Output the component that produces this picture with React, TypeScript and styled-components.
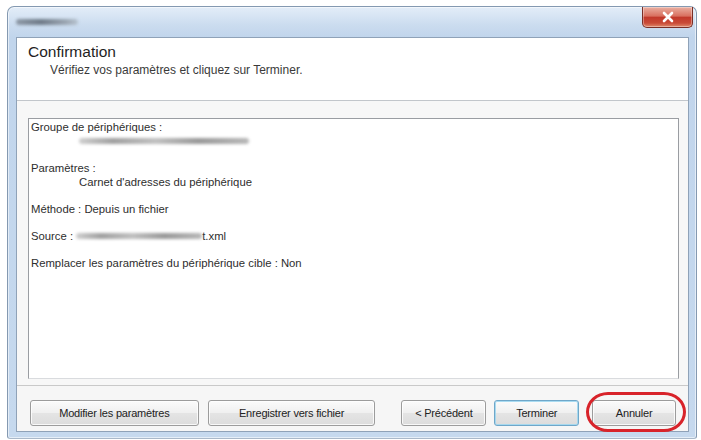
import React from "react";
import styled, { createGlobalStyle } from "styled-components";

const GlobalStyle = createGlobalStyle`
  html, body {
    margin: 0;
    padding: 0;
    background: #ffffff;
  }
  body {
    font-family: "Liberation Sans", Arial, sans-serif;
    color: #2b2b2b;
  }
`;

const Page = styled.div`
  padding: 6px 4px 0 7px;
`;

const Window = styled.div`
  width: 690px;
  height: 433px;
  box-sizing: border-box;
  border: 1px solid #8499b1;
  border-bottom-color: #a9b8c9;
  border-radius: 7px 7px 3px 3px;
  background: linear-gradient(
    to bottom,
    #e3edf8 0px,
    #cbdcef 18px,
    #c1d5ec 30px,
    #c6d9ee 100%
  );
  padding: 0 7px 6px 8px;
  display: flex;
  flex-direction: column;
  box-shadow: inset 0 0 0 1px rgba(255, 255, 255, 0.55);
`;

const TitleBar = styled.div`
  height: 30px;
  display: flex;
  align-items: flex-start;
  justify-content: space-between;
  margin-right: -4px;
`;

const TitleText = styled.div`
  margin-top: 12px;
  width: 62px;
  height: 6px;
  border-radius: 3px;
  background: linear-gradient(90deg, #8e99a6, #6f7b88 40%, #9aa5b1 80%, #b7c3cf);
  filter: blur(1.4px);
`;

const CloseButton = styled.div`
  width: 51px;
  height: 21px;
  box-sizing: border-box;
  border: 1px solid #7a2f26;
  border-top: none;
  border-radius: 0 0 5px 5px;
  background: linear-gradient(
    to bottom,
    #eab0a2 0%,
    #d9705f 45%,
    #c2392b 52%,
    #c94a36 80%,
    #e08a6c 100%
  );
  display: flex;
  align-items: center;
  justify-content: center;
  box-shadow: inset 0 0 0 1px rgba(255, 255, 255, 0.35);
`;

const Client = styled.div`
  flex: 1;
  display: flex;
  flex-direction: column;
  border: 1px solid #8fa2b8;
  background: #f3f3f3;
`;

const Header = styled.div`
  height: 63px;
  box-sizing: border-box;
  background: #ffffff;
  border-bottom: 1px solid #c2c6cb;
  padding: 5px 0 0 11px;
`;

const Heading = styled.div`
  font-size: 15.5px;
  line-height: 18px;
  color: #1f1f1f;
`;

const SubHeading = styled.div`
  margin: 2px 0 0 22px;
  font-size: 12px;
  line-height: 14px;
  color: #3a3a3a;
`;

const Body = styled.div`
  flex: 1;
  display: flex;
  flex-direction: column;
  padding: 17px 9px 6px 11px;
  background: #f7f7f7;
`;

const ListBox = styled.div`
  flex: 1;
  background: #ffffff;
  border: 1px solid #9a9da2;
  border-bottom-color: #d9dbde;
  padding: 1px 0 0 2px;
  display: flex;
  flex-direction: column;
  gap: 13px;
`;

const Item = styled.div`
  display: flex;
  flex-direction: column;
`;

const Line = styled.div<{ $indent?: number }>`
  font-size: 11.3px;
  line-height: 14px;
  height: 14px;
  padding-left: ${(p) => p.$indent ?? 0}px;
  display: flex;
  align-items: center;
  white-space: nowrap;
  color: #2e2e2e;
`;

const Blur = styled.span<{ $width: number }>`
  display: inline-block;
  width: ${(p) => p.$width}px;
  height: 6px;
  border-radius: 3px;
  background: linear-gradient(
    90deg,
    #cfcfcf 0%,
    #a0a0a0 20%,
    #c0c0c0 45%,
    #999999 70%,
    #b8b8b8 100%
  );
  filter: blur(1.4px);
`;

const ButtonBar = styled.div`
  border-top: 1px solid #c9c9c9;
  background: #f6f6f6;
  padding: 14px 12px 5px 13px;
  display: flex;
  align-items: center;
`;

const Button = styled.div<{ $width: number; $gap?: number; $default?: boolean }>`
  position: relative;
  width: ${(p) => p.$width}px;
  height: 26px;
  margin-left: ${(p) => p.$gap ?? 0}px;
  box-sizing: border-box;
  border: 1px solid ${(p) => (p.$default ? "#6fa7c9" : "#9c9c9c")};
  border-radius: 3px;
  background: linear-gradient(
    to bottom,
    #fbfbfb 0%,
    #f0f0f0 48%,
    #e4e4e4 52%,
    #dcdcdc 100%
  );
  box-shadow: inset 0 0 0 1px
    ${(p) => (p.$default ? "rgba(160, 215, 240, 0.9)" : "rgba(255, 255, 255, 0.8)")};
  display: flex;
  align-items: center;
  justify-content: center;
  font-size: 11px;
  letter-spacing: -0.2px;
  color: #222222;
  white-space: nowrap;
`;

const Highlight = styled.div`
  position: absolute;
  left: -7px;
  right: -11px;
  top: -9px;
  bottom: -7px;
  border: 3px solid #d8232a;
  border-radius: 22px / 20px;
  pointer-events: none;
`;

export default function App() {
  return (
    <>
      <GlobalStyle />
      <Page>
        <Window>
          <TitleBar>
            <TitleText />
            <CloseButton>
              <svg width="14" height="12" viewBox="0 0 14 12">
                <path
                  d="M3 2 L11 10 M11 2 L3 10"
                  stroke="#ffffff"
                  strokeWidth="2.6"
                  strokeLinecap="round"
                />
              </svg>
            </CloseButton>
          </TitleBar>
          <Client>
            <Header>
              <Heading>Confirmation</Heading>
              <SubHeading>Vérifiez vos paramètres et cliquez sur Terminer.</SubHeading>
            </Header>
            <Body>
              <ListBox>
                <Item>
                  <Line>Groupe de périphériques :</Line>
                  <Line $indent={48}>
                    <Blur $width={170} />
                  </Line>
                </Item>
                <Item>
                  <Line>Paramètres :</Line>
                  <Line $indent={48}>Carnet d'adresses du périphérique</Line>
                </Item>
                <Item>
                  <Line>Méthode : Depuis un fichier</Line>
                </Item>
                <Item>
                  <Line>
                    Source :&nbsp;
                    <Blur $width={126} />
                    t.xml
                  </Line>
                </Item>
                <Item>
                  <Line>Remplacer les paramètres du périphérique cible : Non</Line>
                </Item>
              </ListBox>
            </Body>
            <ButtonBar>
              <Button $width={169}>Modifier les paramètres</Button>
              <Button $width={168} $gap={9}>
                Enregistrer vers fichier
              </Button>
              <Button $width={85} $gap={26}>
                &lt; Précédent
              </Button>
              <Button $width={85} $gap={8} $default>
                Terminer
              </Button>
              <Button $width={84} $gap={13}>
                Annuler
                <Highlight />
              </Button>
            </ButtonBar>
          </Client>
        </Window>
      </Page>
    </>
  );
}
